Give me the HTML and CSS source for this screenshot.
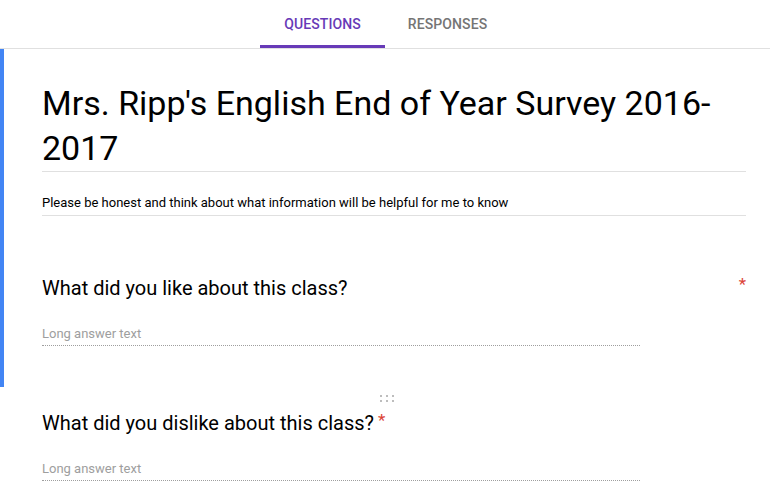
FILE: index.html
```html
<!DOCTYPE html>
<html lang="en">
<head>
<meta charset="utf-8">
<title>Mrs. Ripp's English End of Year Survey 2016-2017</title>
<link rel="stylesheet" href="styles.css">
</head>
<body>
<header class="tabs">
  <div class="tab tab--active">QUESTIONS</div>
  <div class="tab">RESPONSES</div>
</header>
<main>
  <section class="card card--active">
    <h1 class="form-title">Mrs. Ripp's English End of Year Survey 2016-2017</h1>
    <p class="form-desc">Please be honest and think about what information will be helpful for me to know</p>
    <div class="question">
      <div class="q-head">
        <span class="q-text">What did you like about this class?</span>
        <span class="req req--corner">*</span>
      </div>
      <div class="answer">Long answer text</div>
    </div>
  </section>
  <section class="card">
    <div class="drag">
      <span></span><span></span><span></span><span></span><span></span><span></span>
    </div>
    <div class="question question--second">
      <div class="q-head">
        <span class="q-text">What did you dislike about this class?<span class="req req--inline">*</span></span>
      </div>
      <div class="answer">Long answer text</div>
    </div>
  </section>
</main>
</body>
</html>
```
FILE: styles.css
```css
html, body {
  margin: 0;
  padding: 0;
  background: #ffffff;
}
body {
  font-family: Roboto, "Liberation Sans", Arial, sans-serif;
  color: #000000;
  overflow: hidden;
}
.tabs {
  display: flex;
  justify-content: center;
  height: 48px;
  border-bottom: 1px solid #e0e0e0;
  box-sizing: content-box;
}
.tab {
  width: 125px;
  height: 48px;
  box-sizing: border-box;
  border-bottom: 3px solid transparent;
  padding-top: 2px;
  display: flex;
  align-items: center;
  justify-content: center;
  font-size: 14px;
  line-height: 16px;
  font-weight: 500;
  color: #757575;
  letter-spacing: 0.1px;
}
.tab--active {
  color: #673ab7;
  border-bottom-color: #673ab7;
}
.card {
  border-left: 4px solid transparent;
  padding: 0 24px 0 38px;
}
.card--active {
  border-left-color: #4285f4;
  padding-top: 32px;
  padding-bottom: 41px;
}
.form-title {
  margin: 0;
  font-size: 34px;
  line-height: 45px;
  font-weight: 400;
  padding-bottom: 0;
  border-bottom: 1px solid #e0e0e0;
}
.form-desc {
  margin: 21px 0 0;
  font-size: 13px;
  line-height: 20px;
  padding-bottom: 2px;
  border-bottom: 1px solid #e0e0e0;
}
.question {
  margin-top: 60px;
}
.q-head {
  display: flex;
  justify-content: space-between;
  align-items: flex-start;
}
.q-text {
  font-size: 20px;
  line-height: 24px;
}
.req {
  color: #db4437;
  font-size: 17px;
  line-height: 17px;
}
.req--corner {
  margin-right: 0;
  margin-top: 0;
}
.req--inline {
  margin-left: 4px;
  vertical-align: 4px;
}
.answer {
  width: 598px;
  margin-top: 24px;
  font-size: 13px;
  line-height: 20px;
  color: #9e9e9e;
  padding-bottom: 1px;
  border-bottom: 1px dotted #9e9e9e;
}
.drag {
  display: grid;
  grid-template-columns: repeat(3, 2px);
  grid-auto-rows: 2px;
  column-gap: 4px;
  row-gap: 3px;
  justify-content: center;
  padding-top: 8px;
  margin-left: -38px;
  margin-right: -24px;
}
.drag span {
  background: #bdbdbd;
  width: 2px;
  height: 2px;
}
.question--second {
  margin-top: 9px;
}
```
